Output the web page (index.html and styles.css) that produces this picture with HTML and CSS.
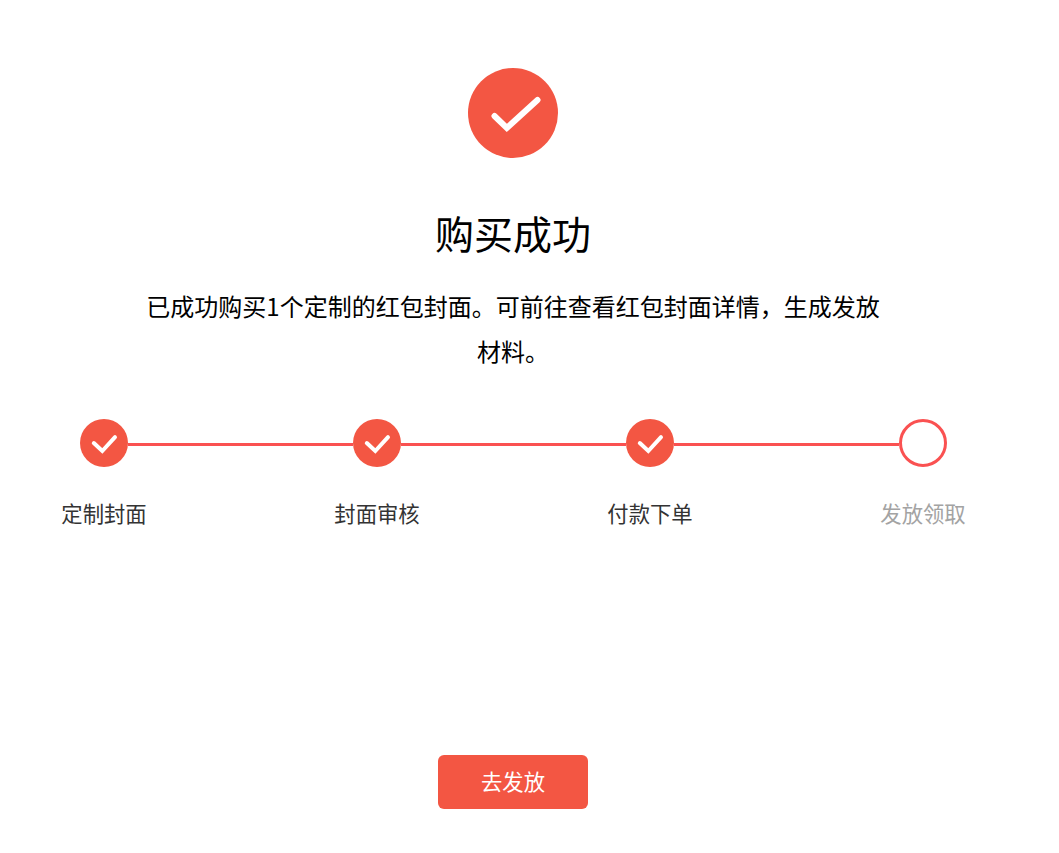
FILE: index.html
```html
<!DOCTYPE html>
<html lang="zh-CN">
<head>
  <meta charset="UTF-8" />
  <meta name="viewport" content="width=device-width, initial-scale=1.0"/>
  <title>购买成功</title>
  <link rel="stylesheet" href="styles.css">
</head>
<body>

<main class="page">
  <div class="result-icon">
    <svg width="90" height="90" viewBox="0 0 90 90">
      <circle cx="45" cy="45" r="45" fill="#f35643"/>
      <path d="M26.5 48 38.8 60 69.5 32" fill="none" stroke="#fff" stroke-width="6" stroke-linecap="round"/>
    </svg>
  </div>

  <h1 class="result-title">购买成功</h1>
  <p class="result-desc">已成功购买1个定制的红包封面。可前往查看红包封面详情，生成发放材料。</p>

  <ol class="steps">
    <li class="step step-done">
      <svg class="step-dot" width="48" height="48" viewBox="0 0 48 48">
        <circle cx="24" cy="24" r="24" fill="#f35643"/>
        <path d="M13.8 24 22.3 32 35 18.2" fill="none" stroke="#fff" stroke-width="4" stroke-linecap="round"/>
      </svg>
      <span class="step-name">定制封面</span>
    </li>
    <li class="step step-done">
      <svg class="step-dot" width="48" height="48" viewBox="0 0 48 48">
        <circle cx="24" cy="24" r="24" fill="#f35643"/>
        <path d="M13.8 24 22.3 32 35 18.2" fill="none" stroke="#fff" stroke-width="4" stroke-linecap="round"/>
      </svg>
      <span class="step-name">封面审核</span>
    </li>
    <li class="step step-done">
      <svg class="step-dot" width="48" height="48" viewBox="0 0 48 48">
        <circle cx="24" cy="24" r="24" fill="#f35643"/>
        <path d="M13.8 24 22.3 32 35 18.2" fill="none" stroke="#fff" stroke-width="4" stroke-linecap="round"/>
      </svg>
      <span class="step-name">付款下单</span>
    </li>
    <li class="step step-todo">
      <svg class="step-dot" width="48" height="48" viewBox="0 0 48 48">
        <circle cx="24" cy="24" r="22.5" fill="#fff" stroke="#fa5151" stroke-width="3"/>
      </svg>
      <span class="step-name">发放领取</span>
    </li>
  </ol>

  <a class="btn-primary" href="#">去发放</a>
</main>

</body>
</html>
```

FILE: styles.css
```css
body {
  font-family: "Noto Sans CJK SC", "Liberation Sans", sans-serif;
  margin: 0;
  padding: 0;
  background-color: #ffffff;
  color: #000;
}

.page {
  width: 1026px;
  height: 853px;
  box-sizing: border-box;
  padding-top: 68px;
  display: flex;
  flex-direction: column;
  align-items: center;
}

.result-icon {
  height: 90px;
}

.result-icon svg {
  display: block;
}

.result-title {
  font-size: 39px;
  font-weight: 400;
  line-height: 56px;
  margin: 46px 0 0;
}

.result-desc {
  width: 744px;
  font-size: 24px;
  line-height: 45px;
  text-align: center;
  margin: 23px 0 0;
}

.steps {
  list-style: none;
  width: 904px;
  box-sizing: border-box;
  margin: 46px 0 0;
  padding: 0 0 0 1px;
  display: flex;
  justify-content: space-between;
}

.step {
  position: relative;
  width: 84px;
  display: flex;
  flex-direction: column;
  align-items: center;
}

/* 步骤之间的连接线 */
.step-done::after {
  content: "";
  position: absolute;
  top: 24px;
  left: 66px;
  width: 225px;
  height: 3px;
  background-color: #fa5151;
}

.step-dot {
  display: block;
}

.step-name {
  font-size: 21.33px;
  line-height: 30px;
  margin-top: 31px;
  color: #333;
  white-space: nowrap;
}

.step-todo .step-name {
  color: #a3a3a3;
}

.btn-primary {
  width: 150px;
  height: 54px;
  margin-top: auto;
  margin-bottom: 44px;
  border-radius: 6px;
  background-color: #f35643;
  color: #fff;
  font-size: 21.33px;
  line-height: 51px;
  text-align: center;
  text-decoration: none;
}
```
